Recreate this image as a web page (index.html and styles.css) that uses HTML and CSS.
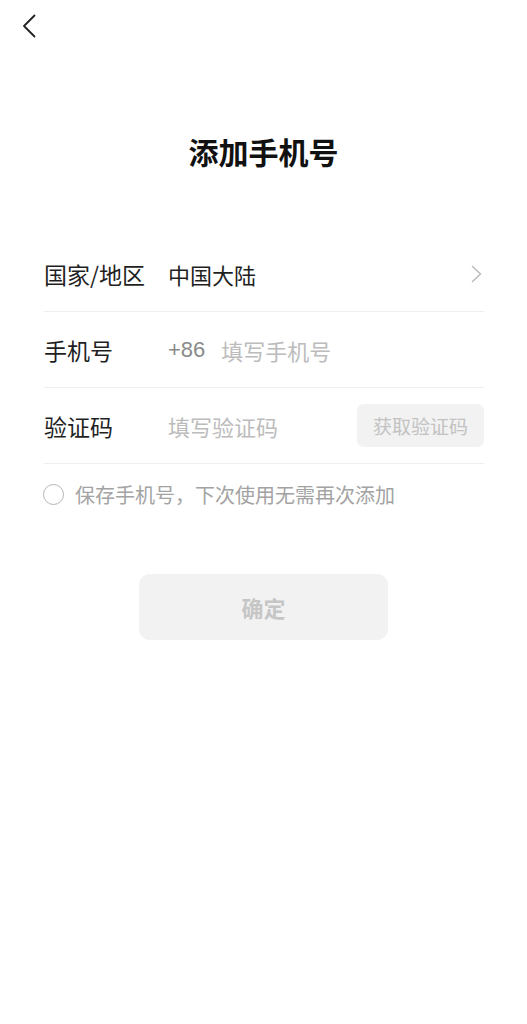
FILE: index.html
```html
<!DOCTYPE html>
<html lang="zh-CN">
<head>
    <meta charset="UTF-8">
    <meta name="viewport" content="width=device-width, initial-scale=1.0">
    <title>添加手机号</title>
    <link rel="stylesheet" href="styles.css">
</head>
<body>
    <div class="nav">
        <svg class="back" width="14" height="24" viewBox="0 0 14 24">
            <path d="M12.5 1.5 L2 12 L12.5 22.5" fill="none" stroke="#222" stroke-width="1.8" stroke-linecap="round" stroke-linejoin="round"/>
        </svg>
    </div>

    <h1 class="title">添加手机号</h1>

    <div class="form">
        <div class="row">
            <span class="label">国家/地区</span>
            <span class="value">中国大陆</span>
            <svg class="chevron" width="11" height="18" viewBox="0 0 11 18">
                <path d="M1.5 1.5 L9.5 9 L1.5 16.5" fill="none" stroke="#bdbdbd" stroke-width="1.6" stroke-linecap="round" stroke-linejoin="round"/>
            </svg>
        </div>
        <div class="row">
            <span class="label">手机号</span>
            <span class="prefix">+86</span>
            <span class="placeholder">填写手机号</span>
        </div>
        <div class="row">
            <span class="label">验证码</span>
            <span class="placeholder grow">填写验证码</span>
            <button class="code-btn">获取验证码</button>
        </div>
        <div class="check">
            <span class="circle"></span>
            <span>保存手机号，下次使用无需再次添加</span>
        </div>
    </div>

    <button class="confirm">确定</button>
</body>
</html>
```

FILE: styles.css
```css
body {
    font-family: "Noto Sans CJK SC", "Noto Sans", sans-serif;
    background-color: #ffffff;
    color: #1f1f1f;
    margin: 0;
    padding: 0;
}
.nav {
    height: 51px;
    padding-left: 22px;
    display: flex;
    align-items: center;
}
.title {
    margin: 80px 0 0;
    font-size: 30px;
    line-height: 40px;
    font-weight: 600;
    text-align: center;
    color: #111;
}
.form {
    margin: 65px 43px 0 44px;
}
.row {
    height: 75px;
    border-bottom: 1px solid #efefef;
    display: flex;
    align-items: center;
    font-size: 22px;
}
.label {
    width: 124px;
    flex-shrink: 0;
    font-size: 23px;
    color: #1f1f1f;
}
.value {
    flex: 1;
    color: #1f1f1f;
}
.chevron {
    margin-right: 2px;
}
.prefix {
    color: #8a8a8a;
    font-family: "Liberation Sans", "Noto Sans CJK SC", sans-serif;
    margin-right: 16px;
}
.placeholder {
    color: #bcbcbc;
}
.grow {
    flex: 1;
}
.code-btn {
    width: 127px;
    height: 43px;
    border: none;
    border-radius: 7px;
    background-color: #f2f2f2;
    color: #c2c2c2;
    font-family: inherit;
    font-size: 19px;
    padding: 0;
}
.check {
    margin-top: 19px;
    display: flex;
    align-items: center;
    gap: 11px;
    font-size: 20px;
    color: #a3a3a3;
    height: 22px;
}
.circle {
    width: 19px;
    height: 19px;
    border: 1.5px solid #b5b5b5;
    border-radius: 50%;
    margin-left: -1px;
}
.confirm {
    display: block;
    margin: 69px auto 0;
    width: 249px;
    height: 66px;
    border: none;
    border-radius: 11px;
    background-color: #f2f2f2;
    color: #c6c6c6;
    font-family: inherit;
    font-size: 22px;
    font-weight: 600;
}
```
